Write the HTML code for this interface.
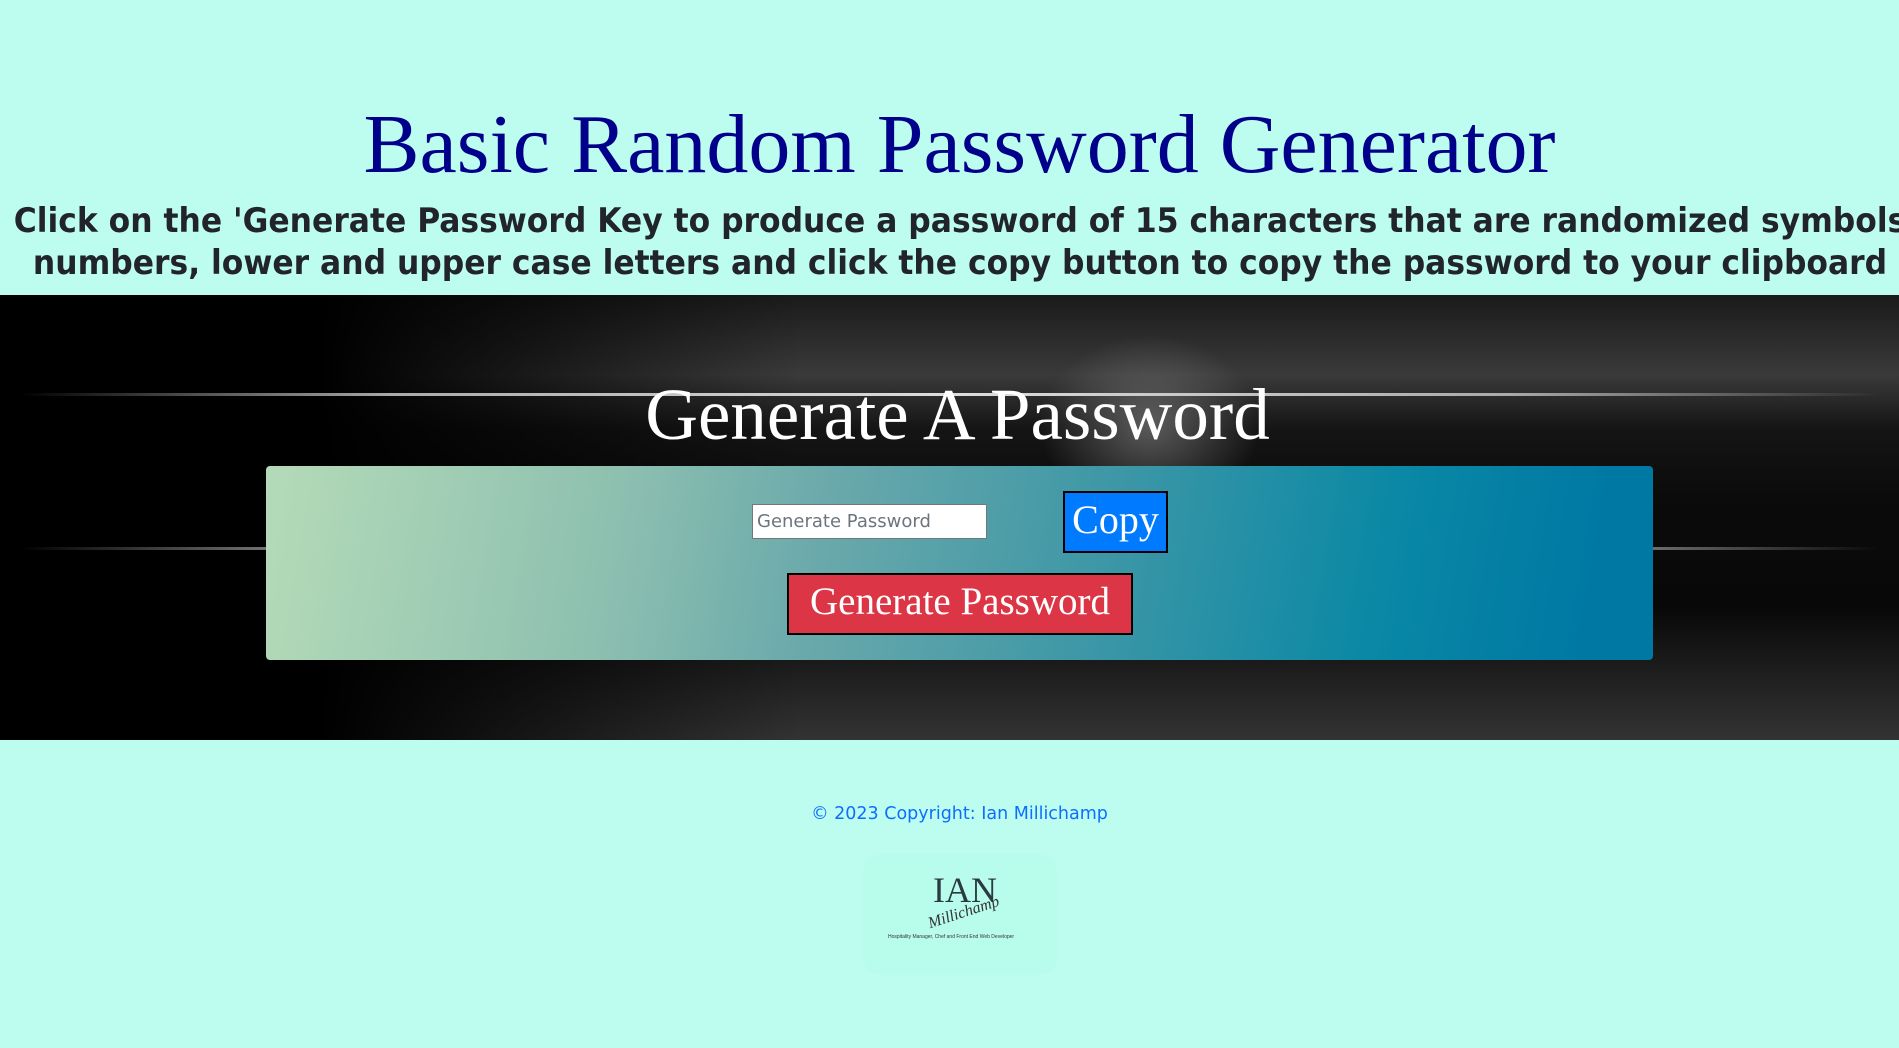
<!DOCTYPE html>
<html><head><meta charset="utf-8">
<style>
html,body{margin:0;padding:0;}
body{width:1899px;height:1048px;background:#bdfdf0;position:relative;overflow:hidden;font-family:"Liberation Sans",sans-serif;}
h1{position:absolute;top:95px;left:10px;width:1899px;margin:0;text-align:center;font-family:"Liberation Serif",serif;font-weight:normal;font-size:84px;color:#00008b;line-height:100px;}
.sub{position:absolute;top:200px;left:-10px;width:1940px;text-align:center;font-family:"DejaVu Sans Condensed","DejaVu Sans",sans-serif;font-stretch:condensed;font-weight:bold;font-size:34px;line-height:42px;color:#212529;white-space:nowrap;transform:scaleX(1.026);}
.band{position:absolute;top:295px;left:0;width:1899px;height:445px;background:
radial-gradient(ellipse 110px 90px at 1150px 130px,rgba(120,120,120,.7),transparent),
linear-gradient(180deg,#1a1a1a 0,#3a3a3a 18%,#151515 30%,#0b0b0b 45%,#080808 70%,#1e1e1e 85%,#333 100%);}
.band:before{content:"";position:absolute;left:0;top:0;width:800px;height:100%;background:linear-gradient(90deg,#000 40%,transparent);}
.line{position:absolute;left:20px;width:1860px;height:3px;background:linear-gradient(90deg,transparent,#aaa 20%,#ddd 50%,#aaa 80%,transparent);}
h2{position:absolute;top:370px;left:8px;width:1899px;margin:0;text-align:center;font-family:"Liberation Serif",serif;font-weight:normal;font-size:73px;color:#fff;line-height:90px;}
.box{position:absolute;left:266px;top:466px;width:1387px;height:194px;border-radius:4px;background:linear-gradient(100deg,#b4dbb8 0%,#8ec0b0 25%,#6aa9ab 40%,#3d97a6 60%,#0a88a5 80%,#0078a4 95%);}
.inp{position:absolute;left:752px;top:504px;height:35px;background:#fff;border:1px solid #767676;font-family:"DejaVu Sans",sans-serif;font-size:18px;color:#6c757d;line-height:33px;padding-left:4px;box-sizing:border-box;width:235px;}
.copy{position:absolute;left:1063px;top:491px;width:105px;height:62px;box-sizing:border-box;border:2px solid #000;background:#007bff;color:#fff;font-family:"Liberation Serif",serif;font-size:40px;text-align:center;line-height:54px;}
.gen{position:absolute;left:787px;top:573px;width:346px;height:62px;box-sizing:border-box;border:2px solid #000;background:#dc3545;color:#fff;font-family:"Liberation Serif",serif;font-size:39px;text-align:center;line-height:54px;}
.foot{position:absolute;top:804px;left:10px;width:1899px;text-align:center;color:#0d6efd;font-family:"DejaVu Sans",sans-serif;font-size:17.5px;}
.logo{position:absolute;left:863px;top:854px;width:194px;height:121px;border-radius:18px;background:#b8fcec;}
.logo .i{position:absolute;left:70px;top:15px;font-family:"Liberation Serif",serif;font-size:36px;color:#2a3a40;}
.logo .m{position:absolute;left:64px;top:50px;font-family:"Liberation Serif",serif;font-style:italic;font-size:16px;color:#333;transform:rotate(-18deg);}
.logo .t{position:absolute;left:25px;top:80px;font-size:5px;color:#333;white-space:nowrap;}
</style></head><body>
<h1>Basic Random Password Generator</h1>
<div class="sub">Click on the 'Generate Password Key to produce a password of 15 characters that are randomized symbols<br>numbers, lower and upper case letters and click the copy button to copy the password to your clipboard</div>
<div class="band"><div class="line" style="top:98px"></div><div class="line" style="top:252px"></div></div>
<h2>Generate A Password</h2>
<div class="box"></div>
<div class="inp">Generate Password</div>
<div class="copy">Copy</div>
<div class="gen">Generate Password</div>
<div class="foot">© 2023 Copyright: Ian Millichamp</div>
<div class="logo"><span class="i">IAN</span><span class="m">Millichamp</span><span class="t">Hospitality Manager, Chef and Front End Web Developer</span></div>
</body></html>
